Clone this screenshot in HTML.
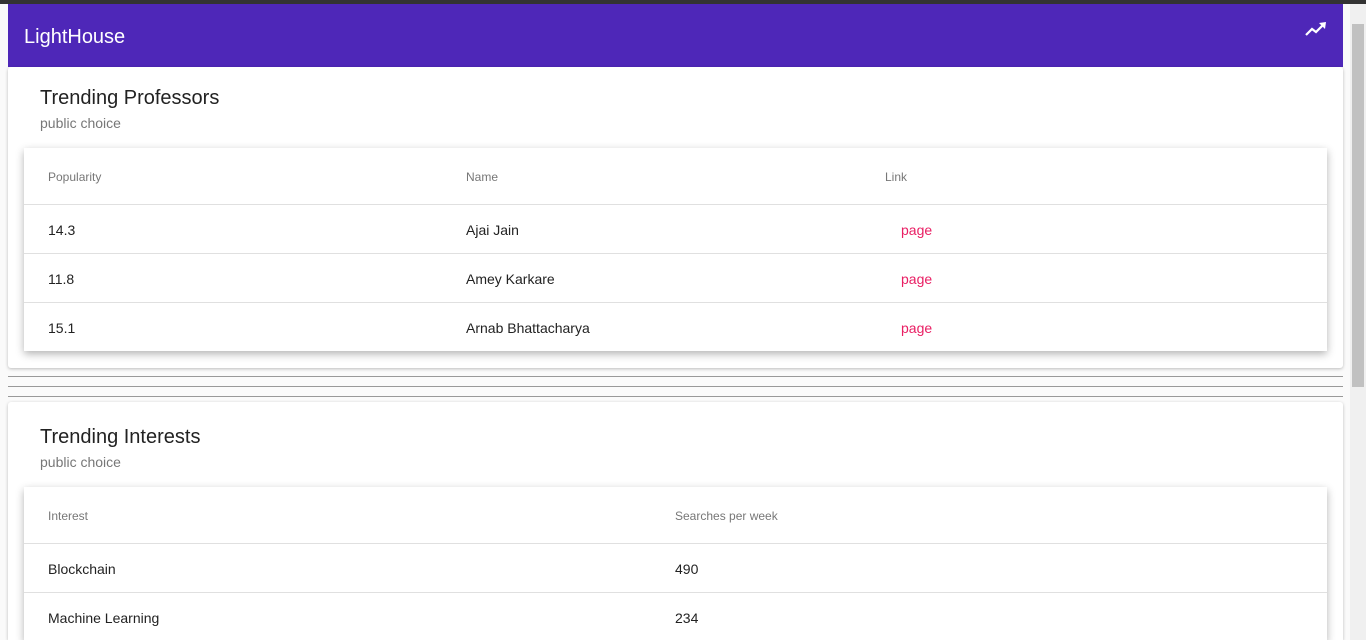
<!DOCTYPE html>
<html><head><meta charset="utf-8"><style>
*{box-sizing:border-box;margin:0;padding:0}
html,body{width:1366px;height:640px;max-height:640px;overflow:hidden;background:#fafafa;font-family:"Liberation Sans",sans-serif}
.wrap{position:relative;width:1366px;height:640px;overflow:hidden}
.topbar{position:absolute;left:0;top:0;width:1366px;height:4px;background:#333}
.hdr{position:absolute;left:8px;top:4px;width:1335px;height:63px;background:#4e27b8;color:#fff}
.hdr .t{position:absolute;left:16px;top:22px;font-size:20px}
.hdr svg{position:absolute;right:16px;top:18px}
.card{position:absolute;left:8px;width:1335px;background:#fff;border-radius:3px;box-shadow:0 1px 3px rgba(0,0,0,.25)}
.card h2{position:absolute;left:32px;font-size:20px;font-weight:normal;color:#222}
.card .s{position:absolute;left:32px;font-size:14px;color:#777}
.tbl{position:absolute;left:16px;width:1303px;background:#fff;box-shadow:0 3px 8px rgba(0,0,0,.3)}
.row{position:relative;height:49px;border-top:1px solid #e0e0e0;font-size:14px;color:#222}
.row.h{height:56px;border-top:none;font-size:12px;color:#777}
.row span{position:absolute;top:17px}
.row.h span{top:22px}
.pk{color:#e91e63}
.line{position:absolute;left:8px;width:1335px;height:1px;background:#999}
.sb{position:absolute;left:1350px;top:4px;width:16px;height:636px;background:#f0f0f0}
.th{position:absolute;left:1352px;top:24px;width:12px;height:363px;background:#c1c1c1}
</style></head><body><div class="wrap">
<div class="topbar"></div>
<div class="hdr"><div class="t">LightHouse</div>
<svg width="22" height="14" viewBox="0 0 22 14"><polyline points="1,13 7,7 11,10 19,2" fill="none" stroke="#fff" stroke-width="2.2"/><polygon points="14,1 21,0 20,7" fill="#fff"/></svg></div>
<div class="card" style="top:67px;height:301px">
<h2 style="top:20px">Trending Professors</h2><div class="s" style="top:48px">public choice</div>
<div class="tbl" style="top:81px">
<div class="row h"><span style="left:24px">Popularity</span><span style="left:442px">Name</span><span style="left:861px">Link</span></div>
<div class="row"><span style="left:24px">14.3</span><span style="left:442px">Ajai Jain</span><span class="pk" style="left:877px">page</span></div>
<div class="row"><span style="left:24px">11.8</span><span style="left:442px">Amey Karkare</span><span class="pk" style="left:877px">page</span></div>
<div class="row"><span style="left:24px">15.1</span><span style="left:442px">Arnab Bhattacharya</span><span class="pk" style="left:877px">page</span></div>
</div></div>
<div class="line" style="top:376px"></div><div class="line" style="top:386px"></div><div class="line" style="top:396px"></div>
<div class="card" style="top:402px;height:238px;overflow:hidden;border-radius:3px 3px 0 0">
<h2 style="top:24px">Trending Interests</h2><div class="s" style="top:52px">public choice</div>
<div class="tbl" style="top:85px">
<div class="row h"><span style="left:24px">Interest</span><span style="left:651px">Searches per week</span></div>
<div class="row"><span style="left:24px">Blockchain</span><span style="left:651px">490</span></div>
<div class="row"><span style="left:24px">Machine Learning</span><span style="left:651px">234</span></div>
</div></div>
<div class="sb"></div><div class="th"></div>
</div></body></html>
